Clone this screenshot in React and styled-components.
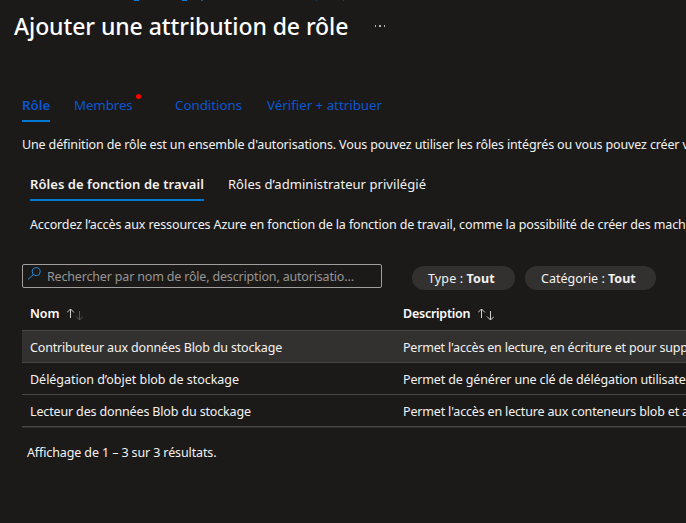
import React from "react";
import styled, { createGlobalStyle } from "styled-components";

const GlobalStyle = createGlobalStyle`
  *, *::before, *::after { box-sizing: border-box; }
  body {
    margin: 0;
    background: #1b1a19;
    color: #f3f2f1;
    font-family: "Segoe UI", "Noto Sans", sans-serif;
    font-size: 12.5px;
    line-height: 20px;
    overflow: hidden;
  }
`;

const Blade = styled.main`
  display: flex;
  flex-direction: column;
  width: 686px;
  height: 523px;
  overflow: hidden;
  white-space: pre;
`;

const BreadcrumbEdge = styled.svg`
  display: block;
  flex: none;
  width: 686px;
  height: 1px;
`;

const TitleBar = styled.header`
  display: flex;
  align-items: center;
  height: 32px;
  margin-top: 9px;
  padding-left: 14px;
`;

const Title = styled.h1`
  width: 360px;
  margin: 0;
  color: #fff;
  font-size: 23px;
  font-weight: 500;
  line-height: 32px;
  letter-spacing: -0.07px;
`;

const MoreIcon = styled.svg`
  width: 12px;
  height: 4px;
`;

const StepTabs = styled.nav`
  display: flex;
  height: 27px;
  margin: 53px 0 0 22px;
`;

const StepTab = styled.a`
  position: relative;
  flex: none;
  width: ${(p) => p.$width}px;
  height: 27px;
  margin-right: ${(p) => p.$gap}px;
  color: #0a57d0;
  font-size: 13.3px;
  font-weight: ${(p) => (p.$active ? 600 : 400)};
  letter-spacing: ${(p) => p.$track || 0}px;
  border-bottom: 2px solid ${(p) => (p.$active ? "#0078d4" : "transparent")};
`;

const RequiredDot = styled.span`
  position: absolute;
  top: -1px;
  right: -7px;
  width: 5px;
  height: 5px;
  border-radius: 50%;
  background: #f00;
`;

const Paragraph = styled.p`
  margin: ${(p) => (p.$nested ? "13px 0 0 30px" : "12px 0 0 22px")};
  line-height: 22px;
  letter-spacing: ${(p) => p.$track}px;
`;

const RoleTabs = styled.nav`
  display: flex;
  gap: 24px;
  margin: 18px 0 0 30px;
`;

const RoleTab = styled.a`
  flex: none;
  height: 27px;
  font-size: 13px;
  font-weight: ${(p) => (p.$active ? 600 : 400)};
  letter-spacing: 0.055px;
  border-bottom: 2px solid ${(p) => (p.$active ? "#0078d4" : "transparent")};
`;

const Filters = styled.div`
  display: flex;
  align-items: flex-start;
  height: 26px;
  margin: 28px 0 0 22px;
`;

const SearchBox = styled.div`
  display: flex;
  align-items: center;
  width: 360px;
  height: 24px;
  margin-right: 30px;
  padding-left: 4px;
  border: 1px solid #a19f9d;
  border-radius: 2px;
`;

const SearchIcon = styled.svg`
  flex: none;
  width: 15px;
  height: 15px;
  margin: -5px 5px 0 0;
`;

const Placeholder = styled.span`
  padding-top: 2px;
  color: #979593;
  letter-spacing: -0.175px;
`;

const Pill = styled.button`
  display: flex;
  align-items: center;
  width: ${(p) => p.$width}px;
  height: 24px;
  margin: 2px 10px 0 0;
  padding: 2px 0 0 16px;
  border: 0;
  border-radius: 12px;
  background: #323130;
  color: inherit;
  font: inherit;
  white-space: pre;
  letter-spacing: ${(p) => p.$track}px;
`;

const Table = styled.div`
  display: flex;
  flex-direction: column;
  margin: 9px 0 0 22px;
  border-bottom: 1px solid #323130;
`;

const Row = styled.div`
  display: grid;
  grid-template-columns: 373px 1fr;
  align-items: center;
  height: 32px;
  padding: 2px 0 0 8px;
  border-top: 1px solid #484644;
  background: ${(p) => (p.$hovered ? "#323130" : "transparent")};

  &:last-child {
    height: 33px;
    border-bottom: 1px solid #484644;
  }
`;

const HeaderRow = styled(Row)`
  height: 31px;
  padding-bottom: 3px;
  border-top: 0;
`;

const HeaderCell = styled.div`
  display: flex;
  align-items: center;
  gap: 8px;
  color: #fff;
  font-weight: 600;
  letter-spacing: ${(p) => p.$track}px;
`;

const SortIcon = styled.svg`
  width: 16px;
  height: 13px;
`;

const Cell = styled.div`
  min-width: 0;
  overflow: hidden;
  letter-spacing: ${(p) => p.$track}px;
`;

const Footer = styled.footer`
  margin: 15px 0 0 27px;
  letter-spacing: -0.12px;
`;

const rows = [
  { name: "Contributeur aux données Blob du stockage", nt: -0.165, text: "Permet l'accès en lecture, en écriture et pour supp", dt: -0.19, hovered: true },
  { name: "Délégation d’objet blob de stockage", nt: -0.02, text: "Permet de générer une clé de délégation utilisate", dt: -0.15 },
  { name: "Lecteur des données Blob du stockage", nt: -0.15, text: "Permet l'accès en lecture aux conteneurs blob et a", dt: -0.17 },
];

function Sort({ down }) {
  return (
    <SortIcon viewBox="0 0 16 13" fill="none" strokeWidth="1">
      <path d="M3.5 10V1M0 4.5L3.5 1L7 4.5" stroke="#d2d0ce" />
      <path d="M12.5 3v9M9 8.5L12.5 12L16 8.5" stroke={down} />
    </SortIcon>
  );
}

export default function App() {
  return (
    <>
      <GlobalStyle />
      <Blade>
        <BreadcrumbEdge viewBox="0 0 686 1" shapeRendering="crispEdges">
          <path d="M134 .5h5M182 .5h5" stroke="#1a7ccb" />
          <path d="M201 .5h2" stroke="#185c91" />
          <path d="M316 .5h1M343 .5h1" stroke="#193d5a" />
        </BreadcrumbEdge>
        <TitleBar>
          <Title>Ajouter une attribution de rôle</Title>
          <MoreIcon viewBox="0 0 12 4" fill="#b3b0ad" shapeRendering="crispEdges">
            <path d="M1 1h1v2h-1zM5 1h2v2h-2zM10 1h1v2h-1z" />
          </MoreIcon>
        </TitleBar>
        <StepTabs>
          <StepTab $active $width={28} $gap={24}>Rôle</StepTab>
          <StepTab $width={60} $gap={41} $track={-0.1}>Membres<RequiredDot /></StepTab>
          <StepTab $width={68} $gap={24}>Conditions</StepTab>
          <StepTab $width={116} $gap={0}>Vérifier + attribuer</StepTab>
        </StepTabs>
        <Paragraph $track={-0.135}>
          Une définition de rôle est un ensemble d'autorisations. Vous pouvez utiliser les rôles intégrés ou vous pouvez créer v
        </Paragraph>
        <RoleTabs>
          <RoleTab $active>Rôles de fonction de travail</RoleTab>
          <RoleTab>Rôles d’administrateur privilégié</RoleTab>
        </RoleTabs>
        <Paragraph $nested $track={-0.12}>
          Accordez l’accès aux ressources Azure en fonction de la fonction de travail, comme la possibilité de créer des mach
        </Paragraph>
        <Filters>
          <SearchBox>
            <SearchIcon viewBox="0 0 15 15" fill="none" stroke="#2b88d8" strokeWidth="1">
              <circle cx="9.2" cy="5.7" r="4" />
              <path d="M6.3 8.6L1 13.5" />
            </SearchIcon>
            <Placeholder>Rechercher par nom de rôle, description, autorisatio…</Placeholder>
          </SearchBox>
          <Pill $width={103} $track={0.13}>Type : <b>Tout</b></Pill>
          <Pill $width={131} $track={0}>Catégorie : <b>Tout</b></Pill>
        </Filters>
        <Table>
          <HeaderRow>
            <HeaderCell $track={-0.1}>Nom<Sort down="#5a5856" /></HeaderCell>
            <HeaderCell $track={-0.25}>Description<Sort down="#d2d0ce" /></HeaderCell>
          </HeaderRow>
          {rows.map((r) => (
            <Row key={r.name} $hovered={r.hovered}>
              <Cell $track={r.nt}>{r.name}</Cell>
              <Cell $track={r.dt}>{r.text}</Cell>
            </Row>
          ))}
        </Table>
        <Footer>Affichage de 1 – 3 sur 3 résultats.</Footer>
      </Blade>
    </>
  );
}
